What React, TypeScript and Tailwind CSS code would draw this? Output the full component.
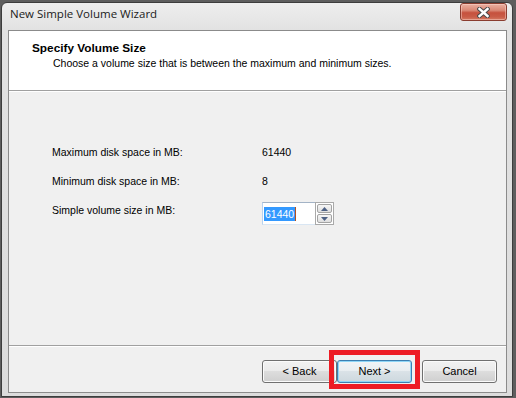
import React from "react";

function WinButton({
  label,
  primary = false,
}: {
  label: string;
  primary?: boolean;
}) {
  const base =
    "w-[75px] h-[23px] rounded-[3px] border flex items-center justify-center text-[11px] leading-[13px] text-black font-['Liberation_Sans',Arial,sans-serif]";
  const normal =
    "border-[#707070] bg-[linear-gradient(to_bottom,#f2f2f2_0%,#ebebeb_45%,#dddddd_50%,#cfcfcf_100%)] shadow-[inset_0_0_0_1px_#fbfbfb]";
  const def =
    "border-[#3c7fb1] bg-[linear-gradient(to_bottom,#f1f4f6_0%,#e9eef1_45%,#dae2e7_50%,#cdd8de_100%)] shadow-[inset_0_0_0_1px_#8fd6f7]";
  return <div className={`${base} ${primary ? def : normal}`}>{label}</div>;
}

function CloseGlyph() {
  return (
    <svg width="13" height="11" viewBox="0 0 13 11">
      <g strokeLinecap="square">
        <path d="M2.5 2 L10.5 9 M10.5 2 L2.5 9" stroke="#4a4a4a" strokeWidth="4.4" />
        <path d="M2.5 2 L10.5 9 M10.5 2 L2.5 9" stroke="#ffffff" strokeWidth="2.4" />
      </g>
    </svg>
  );
}

function Triangle({ up }: { up: boolean }) {
  return (
    <svg width="7" height="4" viewBox="0 0 7 4">
      <path d={up ? "M0 4 L3.5 0 L7 4 Z" : "M0 0 L3.5 4 L7 0 Z"} fill="#4d6185" />
    </svg>
  );
}

export default function App() {
  return (
    <div className="w-[516px] h-[398px] bg-[#5e5e5e] pl-[1px] pt-[2px] overflow-hidden">
      <div className="w-[512px] h-[395px] border border-[#3d3d3d] rounded-t-[6px] bg-[linear-gradient(to_bottom,#eeeeee,#e2e2e2_27px,#dcdcdc)] flex flex-col pl-[6px] pr-[5px]">
        {/* Title bar */}
        <div className="h-[27px] flex items-start justify-between">
          <div className="pl-[2px] pt-[4px] text-[11.5px] leading-[14px] text-[#1b1b1b] font-['Open_Sans','Liberation_Sans',sans-serif]">
            New Simple Volume Wizard
          </div>
          <div className="w-[47px] h-[18px] rounded-[3px] border border-[#8a3d30] bg-[linear-gradient(to_bottom,#eab1a2_0%,#d98774_40%,#c6513d_55%,#c95c47_80%,#d57a63_100%)] shadow-[inset_0_0_0_1px_rgba(255,220,210,0.45)] flex items-center justify-center">
            <CloseGlyph />
          </div>
        </div>

        {/* Client area */}
        <div className="h-[363px] border border-[#8b8b8b] bg-[#f0f0f0] flex flex-col font-['Liberation_Sans',Arial,sans-serif] text-black">
          {/* Header */}
          <div className="h-[59px] bg-white pt-[11px] pl-[23px]">
            <div className="text-[11.8px] font-bold leading-[13px]">Specify Volume Size</div>
            <div className="mt-[2px] pl-[21px] text-[10.5px] leading-[13px]">
              Choose a volume size that is between the maximum and minimum sizes.
            </div>
          </div>
          <div className="h-px bg-[#a0a0a0]" />
          <div className="h-px bg-white" />

          {/* Content */}
          <div className="h-[253px] pt-[54px] pl-[43px] text-[10.5px] leading-[13px]">
            <div className="flex">
              <div className="w-[210px]">Maximum disk space in MB:</div>
              <div>61440</div>
            </div>
            <div className="flex mt-[16px]">
              <div className="w-[210px]">Minimum disk space in MB:</div>
              <div>8</div>
            </div>
            <div className="flex items-start mt-[14px]">
              <div className="w-[210px] pt-[2px]">Simple volume size in MB:</div>
              <div className="flex">
                <div className="w-[53px] h-[23px] bg-white border-t border-l border-b border-t-[#a3b3c6] border-l-[#b9d2ee] border-b-[#d9e6f3] flex items-center pl-[1px]">
                  <span className="bg-[#3399ff] text-white h-[14px] leading-[14px] px-[1px]">61440</span>
                  <span className="w-px h-[14px] bg-[#b4501e]" />
                </div>
                <div className="w-[19px] h-[23px] border border-[#a9a9a9] bg-white p-[1px] flex flex-col gap-[1px]">
                  <div className="flex-1 rounded-[2px] border border-[#a3a3a3] bg-[linear-gradient(to_bottom,#f6f6f6,#dedede)] flex items-center justify-center">
                    <Triangle up />
                  </div>
                  <div className="flex-1 rounded-[2px] border border-[#a3a3a3] bg-[linear-gradient(to_bottom,#f6f6f6,#dedede)] flex items-center justify-center">
                    <Triangle up={false} />
                  </div>
                </div>
              </div>
            </div>
          </div>

          <div className="h-px bg-[#a0a0a0]" />
          <div className="h-px bg-white" />

          {/* Buttons */}
          <div className="h-[45px] pt-[13px] pr-[9px] flex justify-end items-start">
            <WinButton label="< Back" />
            <div className="relative">
              <WinButton label="Next >" primary />
              <div className="absolute left-[-8px] top-[-10px] w-[91px] h-[39px] border-[5px] border-[#ed1c24] pointer-events-none" />
            </div>
            <div className="ml-[10px]">
              <WinButton label="Cancel" />
            </div>
          </div>
        </div>
      </div>
    </div>
  );
}
